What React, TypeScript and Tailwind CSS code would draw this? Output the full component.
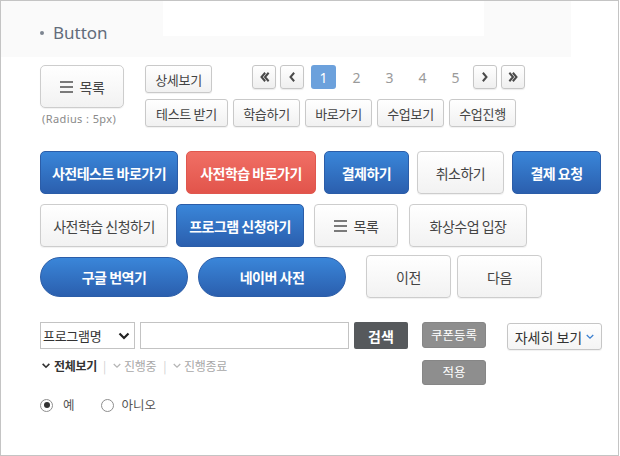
import React from "react";

const Burger = () => (
  <span className="flex flex-col gap-[3px] w-[13px]">
    <span className="block h-[2px] bg-[#7a7a7a]" />
    <span className="block h-[2px] bg-[#7a7a7a]" />
    <span className="block h-[2px] bg-[#7a7a7a]" />
  </span>
);

const Chev = ({ d, w = 10, h = 10, color = "#555", sw = 2 }: { d: string; w?: number; h?: number; color?: string; sw?: number }) => (
  <svg width={w} height={h} viewBox="0 0 10 10" fill="none" stroke={color} strokeWidth={sw} strokeLinecap="square">
    <path d={d} />
  </svg>
);

const whiteSm =
  "flex items-center justify-center h-[28px] border border-[#c9c9c9] rounded-[3px] bg-linear-to-b from-white to-[#f1f1f1] text-[13px] tracking-[-0.3px] leading-none text-[#444] shadow-[0_1px_1px_rgba(0,0,0,0.06)]";
const whiteLg =
  "flex items-center justify-center h-[43px] border border-[#cdcdcd] rounded-[4px] bg-linear-to-b from-white to-[#f2f2f2] text-[14px] tracking-[-0.5px] leading-none text-[#444] shadow-[0_1px_1px_rgba(0,0,0,0.06)]";
const blueLg =
  "flex items-center justify-center h-[43px] border border-[#2b5da8] rounded-[5px] bg-linear-to-b from-[#3a86d9] to-[#2b5fae] text-[14px] font-bold tracking-[-0.5px] leading-none text-white";
const pagBtn =
  "flex items-center justify-center w-[24px] h-[24px] border border-[#c6c6c6] rounded-[3px] bg-linear-to-b from-white to-[#efefef] shadow-[0_1px_1px_rgba(0,0,0,0.08)]";

export default function App() {
  return (
    <div className="w-[619px] h-[456px] border border-[#c4c4c4] bg-white overflow-hidden font-['Noto_Sans_CJK_KR',sans-serif]">
      {/* header */}
      <div className="flex w-[570px] h-[56px] bg-[#fafafa]">
        <div className="w-[162px] pl-[39px] pt-[22px]">
          <div className="flex items-center h-[20px]">
            <span className="block w-[4px] h-[4px] rounded-full bg-[#7d8590]" />
            <span className="ml-[9px] text-[17px] leading-[20px] text-[#626c7a] font-['Noto_Sans',sans-serif]">Button</span>
          </div>
        </div>
        <div className="w-[321px] h-[35px] bg-white" />
      </div>

      <div className="pl-[39px] pt-[8px]">
        {/* row 1 */}
        <div className="flex items-start">
          <div className="w-[84px]">
            <div className={`${whiteLg} w-[84px] rounded-[5px] gap-[7px]`}>
              <Burger />
              <span>목록</span>
            </div>
            <div className="mt-[4px] pl-[2px] text-[11px] tracking-[0.4px] leading-[14px] text-[#8a8a8a] whitespace-nowrap font-['Noto_Sans',sans-serif]">
              (Radius : 5px)
            </div>
          </div>
          <div className="ml-[21px] flex flex-col gap-[6px]">
            <div className="flex items-start">
              <div className={`${whiteSm} w-[67px] h-[27px]`}>상세보기</div>
              <div className="ml-[40px] flex items-center h-[24px]">
                <div className={`${pagBtn} w-[23px]`}>
                  <Chev d="M5 1.5 L2 5 L5 8.5 M8.5 1.5 L5.5 5 L8.5 8.5" w={11} h={10} color="#4a4a4a" />
                </div>
                <div className={`${pagBtn} ml-[4px]`}>
                  <Chev d="M6.5 1.5 L3.5 5 L6.5 8.5" w={10} h={10} color="#4a4a4a" />
                </div>
                <div className="ml-[7px] flex items-center gap-[8px]">
                  <div className="w-[25px] h-[24px] rounded-[3px] bg-[#6ca1dc] text-white text-[14px] flex items-center justify-center font-['Noto_Sans',sans-serif]">1</div>
                  {["2", "3", "4", "5"].map((n) => (
                    <div key={n} className="w-[25px] h-[24px] text-[#9a9a9a] text-[14px] flex items-center justify-center font-['Noto_Sans',sans-serif]">
                      {n}
                    </div>
                  ))}
                </div>
                <div className={`${pagBtn} ml-[5px] w-[23px]`}>
                  <Chev d="M3.5 1.5 L6.5 5 L3.5 8.5" w={10} h={10} color="#4a4a4a" />
                </div>
                <div className={`${pagBtn} ml-[4px]`}>
                  <Chev d="M1.5 1.5 L4.5 5 L1.5 8.5 M5 1.5 L8 5 L5 8.5" w={11} h={10} color="#4a4a4a" />
                </div>
              </div>
            </div>
            <div className="flex gap-[5px]">
              <div className={`${whiteSm} w-[83px]`}>테스트 받기</div>
              <div className={`${whiteSm} w-[67px]`}>학습하기</div>
              <div className={`${whiteSm} w-[67px]`}>바로가기</div>
              <div className={`${whiteSm} w-[67px]`}>수업보기</div>
              <div className={`${whiteSm} w-[67px]`}>수업진행</div>
            </div>
          </div>
        </div>

        {/* row 2 */}
        <div className="mt-[24px] flex gap-[8px]">
          <div className={`${blueLg} w-[138px]`}>사전테스트 바로가기</div>
          <div className="flex items-center justify-center w-[130px] h-[43px] border border-[#e0574e] rounded-[5px] bg-linear-to-b from-[#f06f65] to-[#e2544b] text-[14px] font-bold tracking-[-0.5px] leading-none text-white">
            사전학습 바로가기
          </div>
          <div className={`${blueLg} w-[85px]`}>결제하기</div>
          <div className={`${whiteLg} w-[87px]`}>취소하기</div>
          <div className={`${blueLg} w-[89px]`}>결제 요청</div>
        </div>

        {/* row 3 */}
        <div className="mt-[10px] flex">
          <div className={`${whiteLg} w-[128px]`}>사전학습 신청하기</div>
          <div className={`${blueLg} w-[128px] ml-[8px]`}>프로그램 신청하기</div>
          <div className={`${whiteLg} w-[84px] ml-[10px] gap-[7px]`}>
            <Burger />
            <span>목록</span>
          </div>
          <div className={`${whiteLg} w-[118px] ml-[11px]`}>화상수업 입장</div>
        </div>

        {/* row 4 */}
        <div className="mt-[8px] flex items-center h-[43px]">
          <div className="flex items-center justify-center w-[148px] h-[40px] rounded-full border border-[#2b5da8] bg-linear-to-b from-[#3a86d9] to-[#2b5fae] text-[14px] font-bold tracking-[-0.5px] leading-none text-white">
            구글 번역기
          </div>
          <div className="ml-[10px] flex items-center justify-center w-[148px] h-[40px] rounded-full border border-[#2b5da8] bg-linear-to-b from-[#3a86d9] to-[#2b5fae] text-[14px] font-bold tracking-[-0.5px] leading-none text-white">
            네이버 사전
          </div>
          <div className={`${whiteLg} w-[85px] ml-[20px]`}>이전</div>
          <div className={`${whiteLg} w-[85px] ml-[6px]`}>다음</div>
        </div>

        {/* bottom */}
        <div className="mt-[24px] flex items-start">
          <div className="w-[368px]">
            <div className="flex h-[27px]">
              <div className="w-[95px] h-[27px] border border-[#c3c3c3] bg-white flex items-center pl-[2px] pr-[4px] text-[13px] tracking-[-0.3px] leading-none text-[#333]">
                <span>프로그램명</span>
                <span className="ml-auto">
                  <svg width="12" height="8" viewBox="0 0 12 8" fill="none" stroke="#222" strokeWidth="2.2">
                    <path d="M1.5 1.5 L6 6 L10.5 1.5" />
                  </svg>
                </span>
              </div>
              <div className="ml-[5px] w-[209px] h-[27px] border border-[#c3c3c3] bg-white" />
              <div className="ml-[5px] w-[54px] h-[27px] rounded-[2px] bg-[#56595c] text-white text-[14px] font-bold leading-none flex items-center justify-center">
                검색
              </div>
            </div>
            <div className="mt-[9px] h-[16px] flex items-center text-[12px] tracking-[-0.3px] leading-none">
              <span className="ml-[2px]">
                <Chev d="M1.5 3 L5 6.5 L8.5 3" w={8} h={8} color="#333" sw={2} />
              </span>
              <span className="ml-[4px] font-bold text-[#333]">전체보기</span>
              <span className="ml-[6px] text-[#d0d0d0]">|</span>
              <span className="ml-[7px]">
                <Chev d="M1.5 3 L5 6.5 L8.5 3" w={8} h={8} color="#b5b5b5" sw={1.6} />
              </span>
              <span className="ml-[3px] text-[#a8a8a8]">진행중</span>
              <span className="ml-[7px] text-[#d0d0d0]">|</span>
              <span className="ml-[7px]">
                <Chev d="M1.5 3 L5 6.5 L8.5 3" w={8} h={8} color="#b5b5b5" sw={1.6} />
              </span>
              <span className="ml-[3px] text-[#a8a8a8]">진행종료</span>
            </div>
            <div className="mt-[23px] h-[16px] flex items-center text-[12.5px] leading-none text-[#555]">
              <span className="w-[13px] h-[13px] rounded-full border border-[#8e8e8e] bg-white flex items-center justify-center">
                <span className="w-[6px] h-[6px] rounded-full bg-[#333]" />
              </span>
              <span className="ml-[10px]">예</span>
              <span className="ml-[26px] w-[13px] h-[13px] rounded-full border border-[#8e8e8e] bg-white" />
              <span className="ml-[8px]">아니오</span>
            </div>
          </div>
          <div className="ml-[14px] flex flex-col gap-[12px]">
            <div className="w-[64px] h-[26px] rounded-[3px] border border-[#868686] bg-[#8e8e8e] text-white text-[12.5px] leading-none flex items-center justify-center">
              쿠폰등록
            </div>
            <div className="w-[64px] h-[25px] rounded-[3px] border border-[#868686] bg-[#8e8e8e] text-white text-[12.5px] leading-none flex items-center justify-center">
              적용
            </div>
          </div>
          <div className="ml-[21px] mt-[1px] w-[95px] h-[27px] border border-[#c6c6c6] rounded-[3px] bg-linear-to-b from-white to-[#f4f4f4] flex items-center justify-center text-[14px] leading-none text-[#333] shadow-[0_1px_1px_rgba(0,0,0,0.06)]">
            <span>자세히 보기</span>
            <span className="ml-[4px]">
              <Chev d="M1.5 3 L5 6.5 L8.5 3" w={8} h={8} color="#3a7fd0" sw={1.6} />
            </span>
          </div>
        </div>
      </div>
    </div>
  );
}
